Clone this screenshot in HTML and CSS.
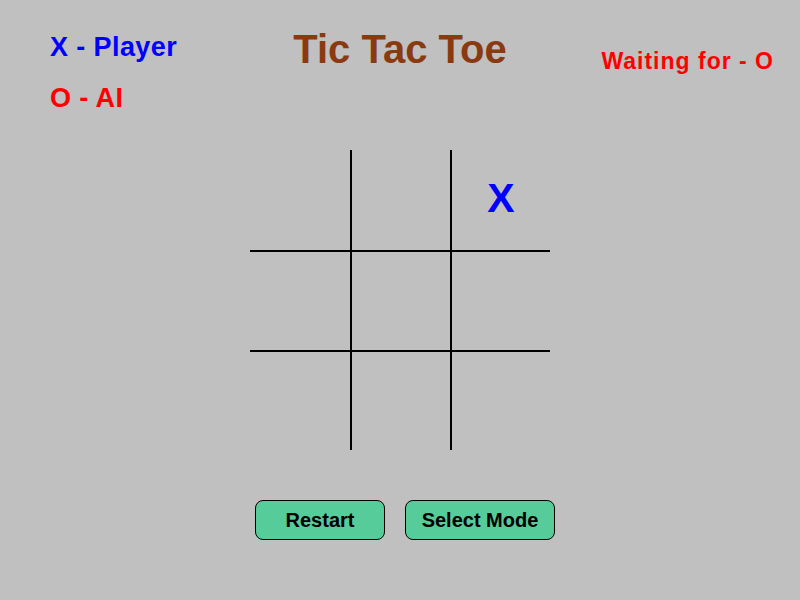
FILE: index.html
```html
<!DOCTYPE html>
<html>
<head>
<meta charset="utf-8">
<link rel="stylesheet" href="styles.css">
</head>
<body>
<div class="app">
  <header class="header">
    <div class="legend">
      <div class="legend-x">X - Player</div>
      <div class="legend-o">O - AI</div>
    </div>
    <h1 class="title">Tic Tac Toe</h1>
    <div class="status">Waiting for - O</div>
  </header>
  <div class="board">
    <div class="cell"></div>
    <div class="cell col"></div>
    <div class="cell col mark-x">X</div>
    <div class="cell row"></div>
    <div class="cell row col"></div>
    <div class="cell row col"></div>
    <div class="cell row"></div>
    <div class="cell row col"></div>
    <div class="cell row col"></div>
  </div>
  <div class="actions">
    <button class="btn btn-restart">Restart</button>
    <button class="btn btn-mode">Select Mode</button>
  </div>
</div>
</body>
</html>
```
FILE: styles.css
```css
html, body {
  margin: 0;
  padding: 0;
  background: #c0c0c0;
}
body {
  width: 800px;
  height: 600px;
  overflow: hidden;
  font-family: "Liberation Sans", Arial, sans-serif;
  font-weight: bold;
}
.header {
  display: grid;
  grid-template-columns: 1fr auto 1fr;
  height: 150px;
}
.legend {
  padding: 34px 0 0 50px;
  font-size: 27px;
  line-height: 27px;
  letter-spacing: 0.4px;
}
.legend-x {
  color: #0000ff;
}
.legend-o {
  color: #ff0000;
  margin-top: 24px;
}
.title {
  margin: 0;
  padding-top: 29px;
  font-size: 40px;
  line-height: 40px;
  color: #8a3a10;
}
.status {
  justify-self: end;
  padding: 50px 26px 0 0;
  font-size: 23px;
  line-height: 23px;
  letter-spacing: 1px;
  color: #ff0000;
}
.board {
  display: grid;
  grid-template-columns: repeat(3, 100px);
  grid-template-rows: repeat(3, 100px);
  width: 300px;
  margin-left: 250px;
}
.cell {
  box-sizing: border-box;
  display: flex;
  align-items: center;
  justify-content: center;
}
.cell.col {
  border-left: 2px solid #000;
}
.cell.row {
  border-top: 2px solid #000;
}
.mark-x {
  color: #0000ff;
  font-size: 41px;
  line-height: 41px;
  padding-bottom: 3px;
}
.actions {
  display: flex;
  gap: 20px;
  padding-left: 255px;
  margin-top: 50px;
}
.btn {
  box-sizing: border-box;
  height: 40px;
  border: 1px solid #000;
  border-radius: 8px;
  background: #55cc99;
  font-family: "Liberation Sans", Arial, sans-serif;
  font-weight: bold;
  font-size: 20px;
  color: #000;
  padding: 0;
}
.btn-restart {
  width: 130px;
}
.btn-mode {
  width: 150px;
}
```
